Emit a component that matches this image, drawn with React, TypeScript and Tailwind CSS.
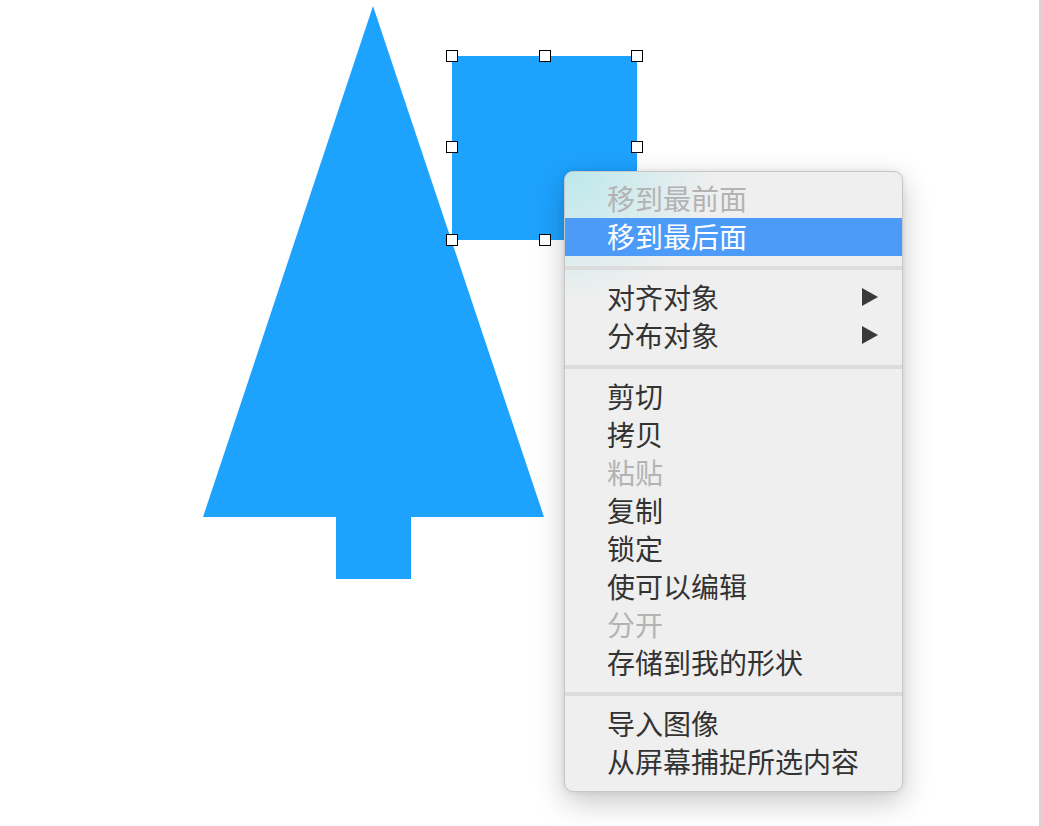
import React from "react";

type Item = { label: string; disabled?: boolean; active?: boolean; submenu?: boolean } | "sep";

const items: Item[] = [
  { label: "移到最前面", disabled: true },
  { label: "移到最后面", active: true },
  "sep",
  { label: "对齐对象", submenu: true },
  { label: "分布对象", submenu: true },
  "sep",
  { label: "剪切" },
  { label: "拷贝" },
  { label: "粘贴", disabled: true },
  { label: "复制" },
  { label: "锁定" },
  { label: "使可以编辑" },
  { label: "分开", disabled: true },
  { label: "存储到我的形状" },
  "sep",
  { label: "导入图像" },
  { label: "从屏幕捕捉所选内容" },
];

const handles: [number, number][] = [
  [452, 56],
  [545, 56],
  [637, 56],
  [452, 147],
  [637, 147],
  [452, 240],
  [545, 240],
];

export default function App() {
  return (
    <div
      className="flex h-[826px] w-[1042px] overflow-hidden bg-white"
      style={{ fontFamily: '"Noto Sans CJK SC", "Noto Sans", sans-serif' }}
    >
      <div className="relative flex-1">
        <svg width="1039" height="826" className="block">
          <polygon points="373,6 203,517 544,517" fill="#1da2fe" />
          <rect x="336" y="516" width="75" height="63" fill="#1da2fe" />
          <rect x="452" y="56" width="185" height="184" fill="#1da2fe" />
          {handles.map(([x, y], i) => (
            <rect
              key={i}
              x={x - 5.5}
              y={y - 5.5}
              width="11"
              height="11"
              fill="#ffffff"
              stroke="#000000"
              strokeWidth="1"
            />
          ))}
        </svg>

        <div className="absolute left-[564px] top-[171px] w-[339px] overflow-hidden rounded-[9px] border border-[#c6c6c6] bg-[#efefef] pb-[10px] pt-[8px] shadow-[0_10px_30px_rgba(0,0,0,0.22),0_0_6px_rgba(0,0,0,0.08)]">
          <div className="pointer-events-none absolute left-0 top-0 h-[130px] w-[150px] bg-[radial-gradient(ellipse_at_top_left,rgba(170,230,235,0.75),rgba(239,239,239,0)_70%)]" />
          <div className="relative">
            {items.map((it, i) =>
              it === "sep" ? (
                <div key={i} className="flex h-[23px] items-center">
                  <div className="h-[4px] w-full bg-[#dcdcdc]" />
                </div>
              ) : (
                <div
                  key={i}
                  className={`flex h-[38px] items-center justify-between pb-[2px] pl-[42px] pr-[24px] text-[28px] leading-none ${
                    it.active
                      ? "bg-[#4d9bf8] text-white"
                      : it.disabled
                      ? "text-[#b3b3b3]"
                      : "text-[#333333]"
                  }`}
                >
                  <span>{it.label}</span>
                  {it.submenu && (
                    <svg width="16" height="18" viewBox="0 0 16 18">
                      <polygon points="0,0 16,9 0,18" fill="#3a3a3a" />
                    </svg>
                  )}
                </div>
              )
            )}
          </div>
        </div>
      </div>
      <div className="w-[3px] bg-[#d6d6d6]" />
    </div>
  );
}
